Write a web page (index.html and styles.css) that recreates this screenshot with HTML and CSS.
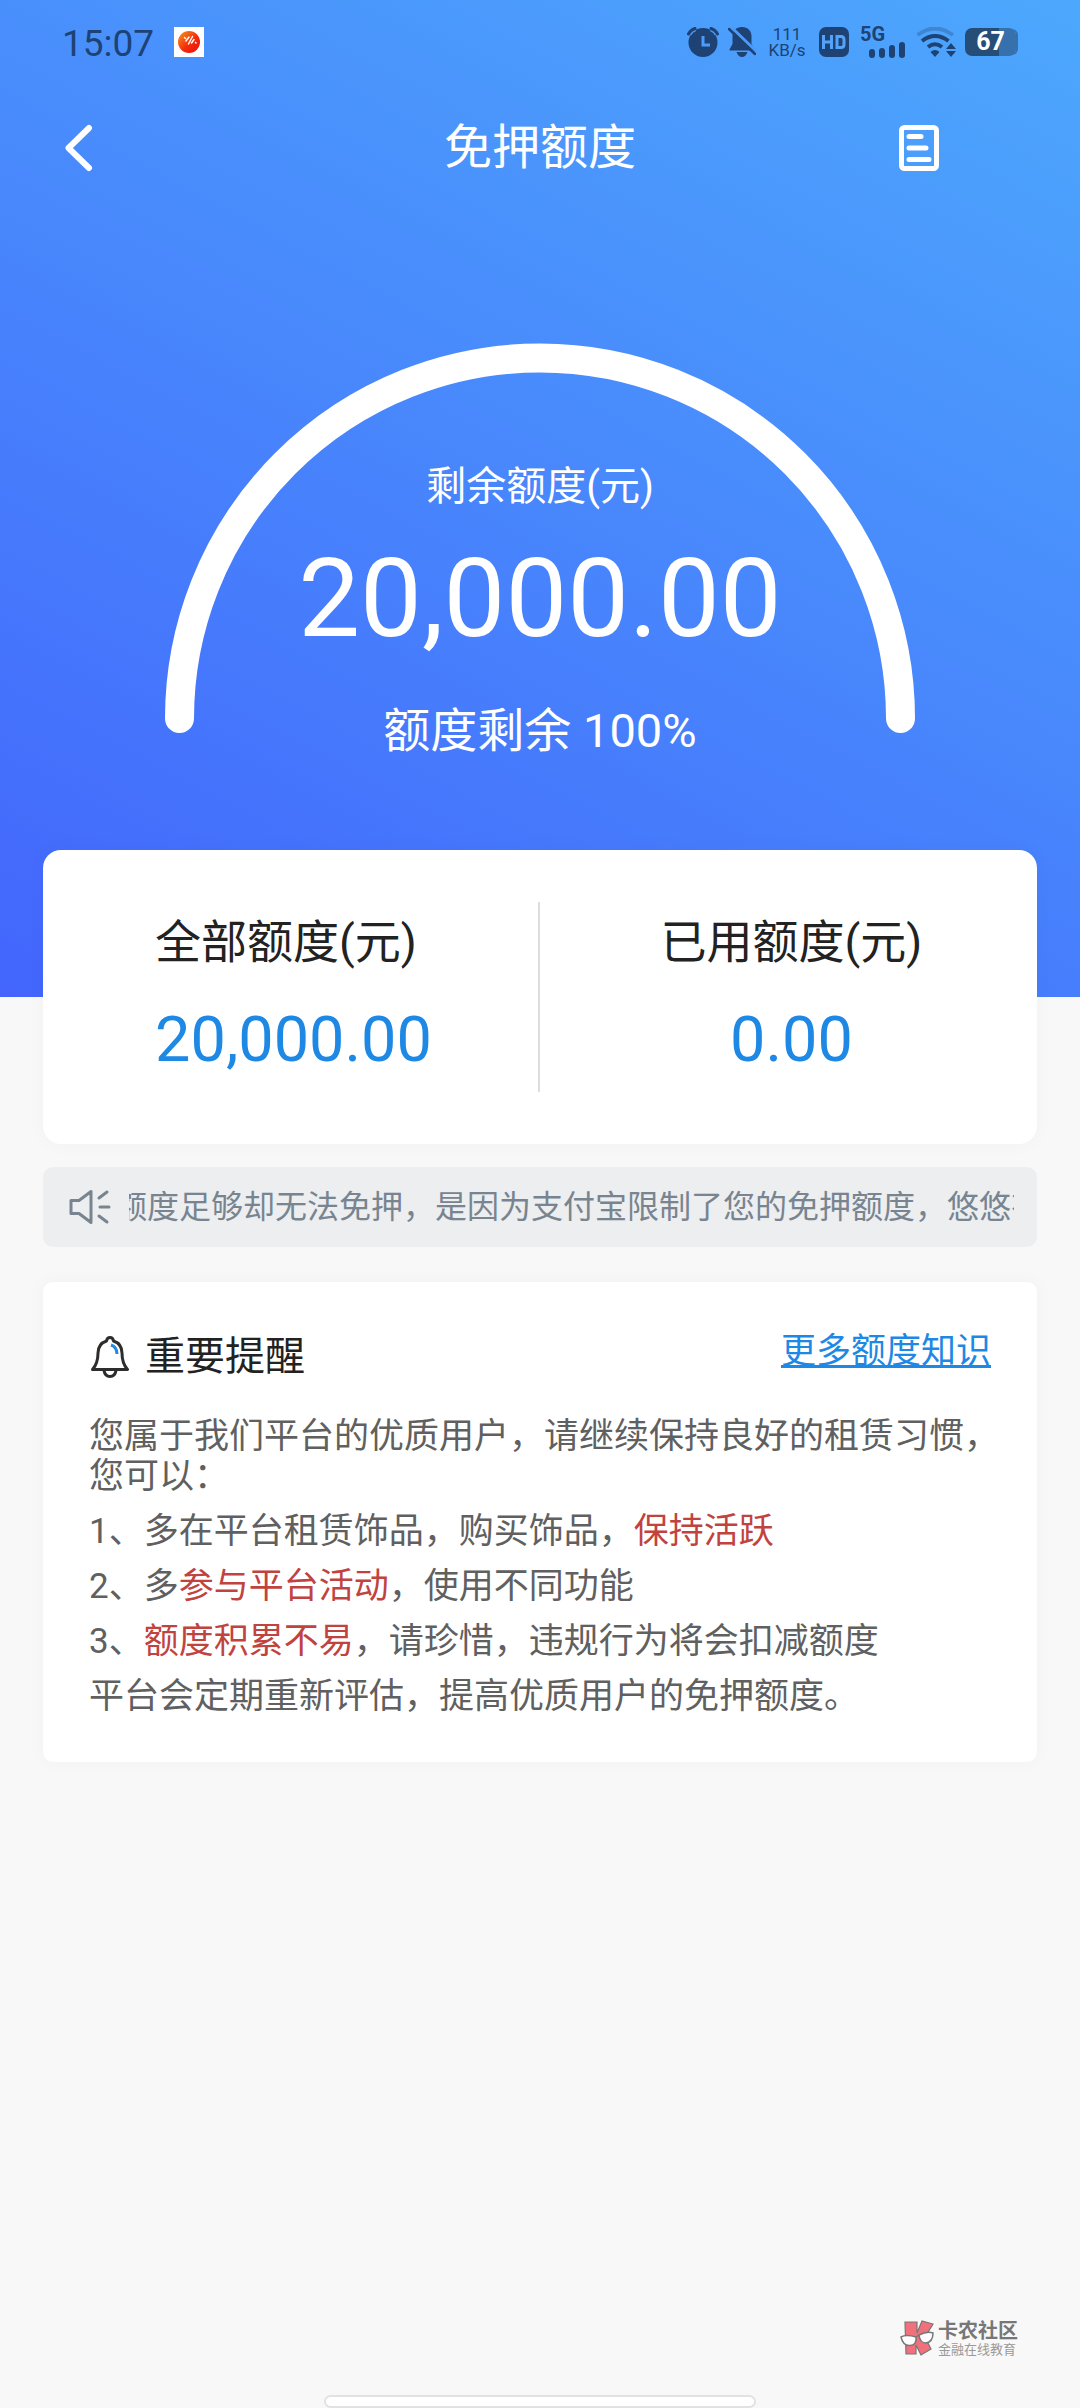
FILE: index.html
```html
<!DOCTYPE html>
<html lang="zh-CN">
<head>
<meta charset="utf-8">
<meta name="viewport" content="width=device-width, initial-scale=1">
<title>免押额度</title>
<link rel="stylesheet" href="styles.css">
</head>
<body>
<div class="page">
  <header class="hero">
    <div class="status">
      <div class="status-left">
        <span class="time">15:07</span>
        <svg class="app-icon" width="30" height="30" viewBox="0 0 30 30" aria-hidden="true">
          <defs><linearGradient id="ball" x1="0" y1="0" x2="1" y2="1"><stop offset="0" stop-color="#f59a1c"/><stop offset=".55" stop-color="#f52b0c"/><stop offset="1" stop-color="#e80d08"/></linearGradient></defs>
          <rect width="30" height="30" fill="#fff"/>
          <circle cx="15" cy="15" r="11" fill="url(#ball)"/>
          <path d="M10.500 10.500l1 1M12 14l3-4M14.500 17l4-7.500M17.500 16l2.500-3.500M21.500 15.500l.5.500" stroke="#fff" stroke-width="1.500" stroke-linecap="round"/>
        </svg>
      </div>
      <div class="status-right">
        <svg width="32" height="30" viewBox="0 0 32 30" aria-hidden="true">
          <circle cx="16" cy="15.500" r="14.500" fill="currentColor"/>
          <path d="M1.500 7Q3.500 3 8 1.500M30.500 7Q28.500 3 24 1.500" stroke="#4b9bfb" stroke-width="6" fill="none"/>
          <path d="M1.500 7Q3.500 3 8 1.500M30.500 7Q28.500 3 24 1.500" stroke="currentColor" stroke-width="3" fill="none" stroke-linecap="round"/>
          <path d="M16 9v9h7" stroke="#4b9bfb" stroke-width="3" fill="none"/>
        </svg>
        <svg class="mute" width="28" height="30" viewBox="0 0 28 30" aria-hidden="true">
          <path d="M14 0c6 0 9.500 4 9.500 9v8l3 5.500v1H1.500v-1l3-5.500V9c0-5 3.500-9 9.500-9zM8.500 25h11c-1 3-3 5-5.500 5s-4.500-2-5.500-5z" fill="currentColor"/>
          <path d="M3 0l26 25" stroke="#4a9afb" stroke-width="3"/>
          <path d="M1 2l26 25" stroke="currentColor" stroke-width="2.500" stroke-linecap="round"/>
        </svg>
        <span class="speed"><span>111</span><span>KB/s</span></span>
        <svg class="hd" width="30" height="30" viewBox="0 0 30 30" aria-hidden="true">
          <rect width="30" height="30" rx="7" fill="currentColor"/>
          <path d="M4.500 8v14M12.500 8v14M4.500 15h8M18 9.500h4q3 0 3 3v5q0 3-3 3h-4z" stroke="#55a3f8" stroke-width="3" fill="none"/>
        </svg>
        <span class="signal">
          <span class="net">5G</span>
          <svg width="36" height="16" viewBox="0 0 36 16" aria-hidden="true"><path d="M3 10v3M13 9v4M23 6v7M33 3v10" stroke="currentColor" stroke-width="6" stroke-linecap="round"/></svg>
        </span>
        <svg class="wifi" width="40" height="30" viewBox="0 0 40 30" aria-hidden="true">
          <path d="M1.500 8Q19 -5 37 8" stroke="currentColor" stroke-opacity=".3" stroke-width="4" fill="none"/>
          <path d="M6 14Q19 4 32.500 14M12 20q7-5.500 14 0" stroke="currentColor" stroke-width="4" fill="none"/>
          <path d="M14.500 25q4.500-4 9 0L19 30zM30 22l5-6 5 6zM30 24l5 6 5-6z" fill="currentColor"/>
        </svg>
        <span class="battery">67</span>
      </div>
    </div>

    <nav class="nav">
      <button class="icon-btn" type="button" aria-label="返回">
        <svg width="30" height="48" viewBox="0 0 30 48"><path d="M26 4L5.500 24 26 44" fill="none" stroke="#fff" stroke-width="6" stroke-linecap="round" stroke-linejoin="round"/></svg>
      </button>
      <h1>免押额度</h1>
      <button class="icon-btn record" type="button" aria-label="额度记录">
        <svg width="40" height="46" viewBox="0 0 40 46"><rect x="2.500" y="2.500" width="35" height="41" rx="3" fill="none" stroke="#fff" stroke-width="5"/><path d="M10 11.500h12M10 23h17M10 34.500h20" stroke="#fff" stroke-width="5" stroke-linecap="round"/></svg>
      </button>
    </nav>

    <section class="gauge">
      <svg class="arc" viewBox="0 0 750 390" aria-hidden="true"><path d="M14.500 375.500a360.500 360.500 0 0 1 721 0" fill="none" stroke="#fff" stroke-width="29" stroke-linecap="round"/></svg>
      <div class="gauge-text">
        <p class="gauge-label">剩余额度(元)</p>
        <p class="gauge-value">20,000.00</p>
        <p class="gauge-rest">额度剩余 100%</p>
      </div>
    </section>
  </header>

  <main class="content">
    <section class="totals">
      <div class="total"><div class="total-box"><p class="total-label">全部额度(元)</p><p class="total-value">20,000.00</p></div></div>
      <div class="total"><div class="total-box centered"><p class="total-label">已用额度(元)</p><p class="total-value">0.00</p></div></div>
    </section>

    <section class="notice">
      <svg width="42" height="36" viewBox="0 0 42 36" aria-hidden="true"><path d="M2 11.500h8L22 2.500v31l-12-9H2zM30 9l8-6M31 18h9M30 27l8 6" fill="none" stroke="currentColor" stroke-width="3" stroke-linejoin="round" stroke-linecap="round"/></svg>
      <p class="notice-text">额度足够却无法免押，是因为支付宝限制了您的免押额度，悠悠有</p>
    </section>

    <section class="tips">
      <div class="tips-head">
        <h2>
          <svg width="38" height="42" viewBox="0 0 38 42" aria-hidden="true"><path d="M19 1.500q3 0 3.500 3.500c6 2 8.500 7 8.500 12 0 8 1.500 12 5.500 16.500h-35C5.500 29 7 25 7 17c0-5 2.500-10 8.500-12Q16 1.500 19 1.500z" fill="#fff" stroke="#2d2d2d" stroke-width="3" stroke-linejoin="round"/><path d="M13 34.500q1 6 6 6t6-6" fill="none" stroke="#2d2d2d" stroke-width="3"/><path d="M20 9q6 2 6 9" fill="none" stroke="#2488e2" stroke-width="3"/></svg>
          重要提醒
        </h2>
        <a href="#more">更多额度知识</a>
      </div>
      <div class="tips-body">
        <p>您属于我们平台的优质用户，请继续保持良好的租赁习惯，您可以：</p>
        <p>1、多在平台租赁饰品，购买饰品，<em>保持活跃</em></p>
        <p>2、多<em>参与平台活动</em>，使用不同功能</p>
        <p>3、<em>额度积累不易</em>，请珍惜，违规行为将会扣减额度</p>
        <p>平台会定期重新评估，提高优质用户的免押额度。</p>
      </div>
    </section>
  </main>

  <footer class="footer">
    <div class="brand">
      <svg width="34" height="36" viewBox="0 0 34 36" aria-hidden="true">
        <path d="M5 2h12v11l5-12 11 3-8 13 6 12-10 6-5-10v9H6z" fill="#f0717b" stroke="#777" stroke-width="1.200"/>
        <path d="M1 17q5-3 15 0 1 8-6 8.500Q3 26 1 17zM19 15q8-4 14-2 0 9-7 10-6 0-7-8z" fill="#fff" stroke="#777" stroke-width="1.500"/>
        <path d="M16 17l3-2" stroke="#777" stroke-width="1.500"/>
      </svg>
      <p class="brand-text"><strong>卡农社区</strong><small>金融在线教育</small></p>
    </div>
    <div class="home-bar"></div>
  </footer>
</div>
</body>
</html>
```
FILE: styles.css
```css
* { box-sizing: border-box; }

body {
  margin: 0;
  background: #f8f8f8;
  color: #222;
  font-family: Roboto, "Noto Sans CJK SC", sans-serif;
}

h1, h2, p { margin: 0; font-weight: 400; }
svg { display: block; flex: none; }

.page {
  min-height: 100vh;
  display: flex;
  flex-direction: column;
}

/* Blue header */
.hero {
  padding-bottom: 238px;
  background: linear-gradient(28deg, #4365fc, #4da8fc);
  color: #fff;
}

.status {
  display: flex;
  justify-content: space-between;
  align-items: center;
  height: 84px;
  padding: 0 61px 0 62px;
  color: #1d4273;
}

.status-left, .status-right { display: flex; align-items: center; }
.status-left { gap: 20px; }
.time { padding-top: 4px; font-size: 37px; line-height: 40px; }

.mute { margin-left: 9px; }
.speed {
  display: flex;
  flex-direction: column;
  align-items: center;
  width: 36px;
  margin-left: 13px;
  font-size: 17px;
  line-height: 16px;
}
.hd { margin-left: 14px; }

.signal {
  display: flex;
  flex-direction: column;
  margin-left: 11px;
}
.signal svg { margin-left: 9px; }
.net { font-size: 20px; line-height: 16px; font-weight: 700; }
.wifi { margin-left: 11px; }

.battery {
  width: 51px;
  height: 28px;
  margin: 0 3px 0 9px;
  border-radius: 7px;
  background: linear-gradient(90deg, #264d78 67%, #3670ad 67%);
  box-shadow: 3px 0 0 -1px #3670ad;
  color: #fff;
  font-size: 25px;
  font-weight: 700;
  line-height: 28px;
  text-align: center;
}

.nav {
  display: grid;
  grid-template-columns: 1fr auto 1fr;
  align-items: center;
  height: 128px;
  padding: 0 63px;
}
.nav h1 { font-size: 48px; line-height: 60px; }

.icon-btn {
  justify-self: start;
  padding: 0;
  border: 0;
  background: none;
  cursor: pointer;
}
.record { justify-self: end; margin-right: 78px; }

/* Half-circle gauge with its figures in the same grid cell */
.gauge {
  display: grid;
  justify-items: center;
  padding: 131px 24px 0;
}
.arc, .gauge-text { grid-area: 1 / 1; }
.arc { width: 100%; max-width: 750px; }
.gauge-text { padding-top: 120px; text-align: center; }
.gauge-label { font-size: 40px; line-height: 48px; }
.gauge-value { margin-top: 24px; font-size: 110px; line-height: 128px; }
.gauge-rest { margin-top: 40px; font-size: 47px; line-height: 56px; }

/* Cards */
.content {
  display: flex;
  flex-direction: column;
  margin-top: -147px;
  padding: 0 43px;
}

.totals {
  display: grid;
  grid-template-columns: 1fr 1fr;
  padding: 52px 0;
  border-radius: 18px;
  background: #fff;
  box-shadow: 0 0 20px rgba(0, 0, 0, 0.03);
}
.total {
  display: flex;
  justify-content: center;
  height: 190px;
  padding: 12px 0 0 6px;
}
.total:first-child { border-right: 2px solid #ddd; }
.centered { text-align: center; }
.total-label { font-size: 46px; line-height: 56px; }
.total-value {
  margin-top: 34px;
  color: #1e88e5;
  font-size: 63px;
  line-height: 72px;
}

.notice {
  display: flex;
  align-items: center;
  gap: 18px;
  height: 80px;
  margin-top: 23px;
  padding: 0 23px 0 26px;
  border-radius: 10px;
  background: #eceef0;
  color: #78848f;
}
.notice-text {
  flex: 1;
  min-width: 0;
  overflow: hidden;
  font-size: 32px;
  line-height: 44px;
  text-indent: -14px;
  white-space: nowrap;
}

.tips {
  margin-top: 35px;
  padding: 45px 36px 45px 46px;
  border-radius: 10px;
  background: #fff;
  box-shadow: 0 0 20px rgba(0, 0, 0, 0.03);
}
.tips-head {
  display: flex;
  justify-content: space-between;
  align-items: flex-start;
  padding-right: 10px;
}
.tips-head h2 {
  display: flex;
  align-items: center;
  gap: 16px;
  padding-left: 2px;
  font-size: 40px;
  line-height: 60px;
}
.tips-head a {
  color: #1e88e5;
  font-size: 35px;
  line-height: 50px;
  text-decoration-thickness: 3px;
  text-decoration-skip-ink: none;
}
.tips-body {
  display: flex;
  flex-direction: column;
  gap: 15px;
  padding-top: 30px;
  color: #606060;
  font-size: 35px;
  line-height: 40px;
}
.tips-body em { color: #c1433f; font-style: normal; }

/* Brand mark and system home bar */
.footer {
  display: flex;
  flex-direction: column;
  align-items: center;
  gap: 38px;
  margin-top: auto;
}
.brand {
  display: flex;
  align-items: center;
  align-self: flex-end;
  gap: 4px;
  padding-right: 62px;
}
.brand-text { display: flex; flex-direction: column; color: #777; }
.brand-text strong { font-size: 20px; line-height: 24px; }
.brand-text small { color: #999; font-size: 13px; line-height: 14px; }
.home-bar {
  width: 40%;
  height: 13px;
  border: 2px solid #e2e2e2;
  border-radius: 7px;
  background: #fff;
}
```
